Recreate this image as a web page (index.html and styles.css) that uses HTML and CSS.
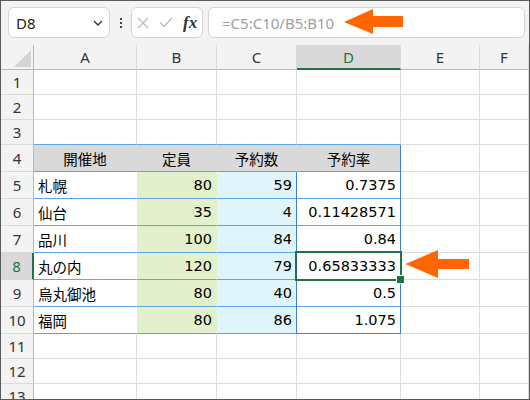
FILE: index.html
```html
<!DOCTYPE html>
<html lang="ja">
<head>
    <meta charset="UTF-8">
    <title>予約率</title>
    <link rel="stylesheet" href="styles.css">
</head>
<body>
<div class="app">
    <div class="toolbar">
        <div class="namebox">
            <span>D8</span>
            <svg class="chev" width="10" height="6" viewBox="0 0 10 6"><path d="M1 1l4 4 4-4" fill="none" stroke="#333" stroke-width="1.3"/></svg>
        </div>
        <div class="more"><i></i><i></i><i></i></div>
        <div class="fxbox">
            <svg width="12" height="12" viewBox="0 0 12 12"><path d="M1 1l10 10M11 1L1 11" stroke="#bdbdbd" stroke-width="1.3"/></svg>
            <svg class="ok" width="14" height="11" viewBox="0 0 14 11"><path d="M1 5.5l4 4L13 1" fill="none" stroke="#bdbdbd" stroke-width="1.3"/></svg>
            <span class="fx">fx</span>
        </div>
        <div class="formula">=C5:C10/B5:B10</div>
    </div>

    <div class="sheet">
        <div class="row hdr">
            <div class="rh corner"><span class="tri"></span></div>
            <div class="ch">A</div>
            <div class="ch">B</div>
            <div class="ch">C</div>
            <div class="ch sel">D</div>
            <div class="ch">E</div>
            <div class="ch">F</div>
        </div>
        <div class="row">
            <div class="rh">1</div>
            <div class="c"></div><div class="c"></div><div class="c"></div><div class="c"></div><div class="c"></div><div class="c"></div>
        </div>
        <div class="row">
            <div class="rh">2</div>
            <div class="c"></div><div class="c"></div><div class="c"></div><div class="c"></div><div class="c"></div><div class="c"></div>
        </div>
        <div class="row">
            <div class="rh">3</div>
            <div class="c tb"></div><div class="c tb"></div><div class="c tb"></div><div class="c tb"></div><div class="c"></div><div class="c"></div>
        </div>
        <div class="row tall">
            <div class="rh">4</div>
            <div class="c tb th">開催地</div>
            <div class="c tb th">定員</div>
            <div class="c tb th">予約数</div>
            <div class="c tb th rb">予約率</div>
            <div class="c"></div><div class="c"></div>
        </div>
        <div class="row tall">
            <div class="rh">5</div>
            <div class="c tb nr">札幌</div>
            <div class="c tb g num">80</div>
            <div class="c tb b num">59</div>
            <div class="c tb num rb">0.7375</div>
            <div class="c"></div><div class="c"></div>
        </div>
        <div class="row tall">
            <div class="rh">6</div>
            <div class="c tb nr">仙台</div>
            <div class="c tb g num">35</div>
            <div class="c tb b num">4</div>
            <div class="c tb num rb">0.11428571</div>
            <div class="c"></div><div class="c"></div>
        </div>
        <div class="row tall">
            <div class="rh">7</div>
            <div class="c tb nr">品川</div>
            <div class="c tb g num">100</div>
            <div class="c tb b num">84</div>
            <div class="c tb num rb">0.84</div>
            <div class="c"></div><div class="c"></div>
        </div>
        <div class="row tall">
            <div class="rh sel">8</div>
            <div class="c tb nr">丸の内</div>
            <div class="c tb g num">120</div>
            <div class="c tb b num">79</div>
            <div class="c tb num rb act">0.65833333</div>
            <div class="c"></div><div class="c"></div>
        </div>
        <div class="row tall">
            <div class="rh">9</div>
            <div class="c tb nr">烏丸御池</div>
            <div class="c tb g num">80</div>
            <div class="c tb b num">40</div>
            <div class="c tb num rb">0.5</div>
            <div class="c"></div><div class="c"></div>
        </div>
        <div class="row tall">
            <div class="rh">10</div>
            <div class="c tb nr">福岡</div>
            <div class="c tb g num">80</div>
            <div class="c tb b num">86</div>
            <div class="c tb num rb bb">1.075</div>
            <div class="c"></div><div class="c"></div>
        </div>
        <div class="row">
            <div class="rh">11</div>
            <div class="c"></div><div class="c"></div><div class="c"></div><div class="c"></div><div class="c"></div><div class="c"></div>
        </div>
        <div class="row">
            <div class="rh">12</div>
            <div class="c"></div><div class="c"></div><div class="c"></div><div class="c"></div><div class="c"></div><div class="c"></div>
        </div>
        <div class="row">
            <div class="rh">13</div>
            <div class="c"></div><div class="c"></div><div class="c"></div><div class="c"></div><div class="c"></div><div class="c"></div>
        </div>
    </div>

    <svg class="arrow arrow-top" width="66" height="32" viewBox="0 0 66 32"><polygon points="4,16 33,3 33,10 63,10 63,21 33,21 33,28" fill="#ff6600"/></svg>
    <svg class="arrow arrow-cell" width="72" height="36" viewBox="0 0 72 36"><polygon points="5.5,18 38,4 38,13 69,13 69,23 38,23 38,32" fill="#ff6600"/></svg>
</div>
</body>
</html>
```

FILE: styles.css
```css
* { box-sizing: border-box; }
body { margin: 0; background: #fff; }

.app {
    width: 530px; height: 400px;
    border: 1px solid #5a5a5a;
    position: relative; overflow: hidden;
    font-family: 'Noto Sans', sans-serif;
}

/* formula bar */
.toolbar {
    height: 44px; background: #f3f3f3;
    display: flex; align-items: flex-start;
    padding-top: 6px;
}
.namebox {
    margin-left: 7px; width: 102px; height: 31px;
    background: #fff; border: 1px solid #d4d4d4; border-radius: 6px;
    display: flex; align-items: center; justify-content: space-between;
    padding: 0 6px 0 7px;
    font-size: 15px; color: #222;
}
.more {
    width: 21px; height: 31px;
    display: flex; flex-direction: column; align-items: center; justify-content: center; gap: 2px;
}
.more i { display: block; width: 2px; height: 2px; background: #444; }
.fxbox {
    width: 72px; height: 31px;
    background: #fff; border: 1px solid #d4d4d4; border-radius: 6px;
    display: flex; align-items: center;
    padding-left: 5px;
}
.fxbox .ok { margin-left: 10px; }
.fx {
    margin-left: 10px;
    font-family: 'Liberation Serif', serif; font-style: italic; font-weight: bold;
    font-size: 17px; color: #333;
}
.formula {
    flex: 1; margin: 0 4px 0 5px; height: 31px;
    background: #fff; border: 1px solid #d4d4d4; border-radius: 6px;
    display: flex; align-items: center; padding-left: 13px;
    font-size: 15px; color: #a0a0a0;
}

/* grid */
.sheet { height: 354px; overflow: hidden; }
.row {
    display: grid;
    grid-template-columns: 33px 103px 80px 80px 104px 79px 1fr;
    height: 25px;
}
.row.tall { height: 27px; }

.rh {
    background: #f3f3f3;
    border-right: 1px solid #b9b9b9; border-bottom: 1px solid #d9d9d9;
    display: flex; align-items: center; justify-content: center;
    font-size: 15px; color: #333;
}
.rh.sel {
    background: #d9d9d9; color: #217346;
    border-right: 2px solid #217346;
}
.corner { position: relative; border-bottom-color: #b9b9b9; }
.tri {
    position: absolute; right: 2px; bottom: 2px;
    width: 0; height: 0;
    border-left: 17px solid transparent;
    border-bottom: 17px solid #d4d4d4;
}
.ch {
    background: #f3f3f3;
    border-right: 1px solid #d9d9d9; border-bottom: 1px solid #b9b9b9;
    display: flex; align-items: center; justify-content: center;
    font-size: 15px; color: #333;
}
.ch.sel {
    background: #d9d9d9; color: #217346;
    border-bottom: 2px solid #217346;
}

.c {
    border-right: 1px solid #dcdcdc; border-bottom: 1px solid #dcdcdc;
    display: flex; align-items: center;
    padding: 0 4px;
    font-family: 'DejaVu Sans', 'Noto Sans CJK JP', sans-serif;
    font-size: 14.5px; color: #000;
}
.c.tb { border-bottom-color: #5aa6e6; }
.c.th { background: #d9d9d9; border-right-color: transparent; justify-content: center; }
.c.nr { border-right-color: transparent; }
.c.g { background: #e2f0cb; border-right-color: transparent; }
.c.b { background: #e0f4fb; border-right-color: #3d82d0; }
.c.num { justify-content: flex-end; }
.c.rb { border-right-color: #3d82d0; }
.c.bb { border-bottom-color: #3d82d0; }

/* active cell */
.act { position: relative; }
.act::after {
    content: ""; position: absolute;
    left: -2px; top: -2px; right: -2px; bottom: -2px;
    border: 2px solid #217346; z-index: 2;
}
.act::before {
    content: ""; position: absolute;
    right: -5px; bottom: -5px; width: 7px; height: 7px;
    background: #217346; border: 1px solid #fff; z-index: 3;
}

/* callouts */
.arrow { position: absolute; }
.arrow-top { left: 339px; top: 5px; }
.arrow-cell { left: 399px; top: 245px; }
```
